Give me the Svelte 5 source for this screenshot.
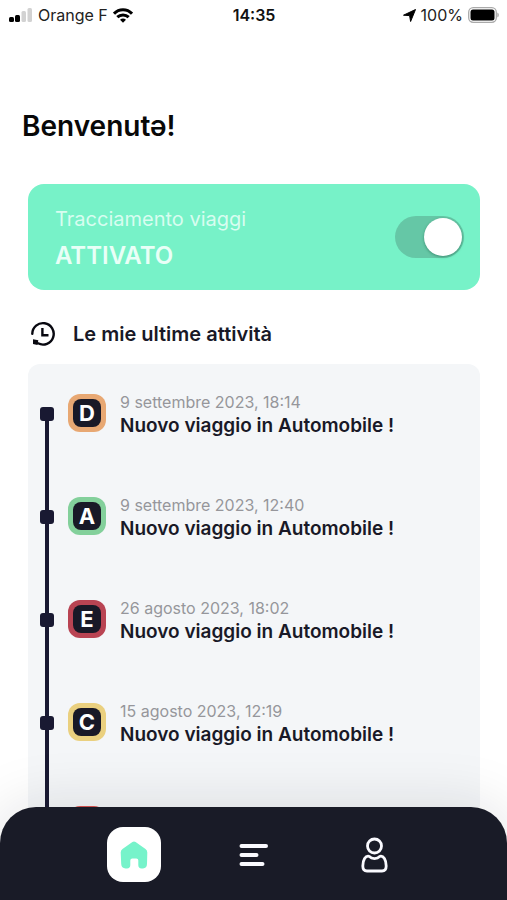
<script>
  let tracking = $state(true);

  const trips = [
    { grade: 'D', color: '#e8a873', date: '9 settembre 2023, 18:14' },
    { grade: 'A', color: '#83d09b', date: '9 settembre 2023, 12:40' },
    { grade: 'E', color: '#b94453', date: '26 agosto 2023, 18:02' },
    { grade: 'C', color: '#ead07f', date: '15 agosto 2023, 12:19' },
    { grade: 'E', color: '#d9534f', date: '14 agosto 2023, 18:47' }
  ];
</script>

<div class="screen">
  <header class="status">
    <div class="side">
      <svg width="24" height="16" viewBox="0 0 24 16" aria-hidden="true">
        <rect x="0" y="10" width="5" height="5" rx="1.5" fill="#000" />
        <rect x="6" y="8" width="5" height="7" rx="1.5" fill="#000" />
        <rect x="12.500" y="4" width="4.500" height="11" rx="1.5" fill="#d2d2d2" />
        <rect x="18.500" y="1" width="4.500" height="14" rx="1.5" fill="#d2d2d2" />
      </svg>
      <span class="carrier">Orange F</span>
      <svg width="20" height="15" viewBox="0 0 20 15" fill="none" stroke="#000" stroke-width="3" aria-hidden="true">
        <path d="M1 5.600C6 .4 14 .4 19 5.600" />
        <path d="M4.300 9.200C7.500 6.100 12.500 6.100 15.700 9.200" />
        <path d="M10 14.800 7 11.800Q10 9.300 13 11.800Z" fill="#000" stroke="none" />
      </svg>
    </div>
    <span class="clock">14:35</span>
    <div class="side end">
      <svg width="13" height="13" viewBox="0 0 13 13" aria-hidden="true">
        <path d="M12.500 .5 7.600 12.500 6.600 6.600 .5 6.200Z" fill="#000" stroke="#000" stroke-linejoin="round" />
      </svg>
      <span class="percent">100%</span>
      <svg width="31" height="16" viewBox="0 0 31 16" aria-hidden="true">
        <rect x=".7" y=".7" width="27.600" height="14.600" rx="4.500" fill="#fff" stroke="#aaa" stroke-width="1.300" />
        <rect x="2.500" y="2.500" width="24" height="11" rx="2.500" fill="#000" />
        <path d="M29.300 5.500Q30.900 6.300 30.900 8T29.300 10.500Z" fill="#aaa" />
      </svg>
    </div>
  </header>

  <main>
    <h1>Benvenutə!</h1>

    <section class="tracking">
      <label for="tracking">
        <span class="caption">Tracciamento viaggi</span>
        <strong>{tracking ? 'ATTIVATO' : 'DISATTIVATO'}</strong>
      </label>
      <input id="tracking" type="checkbox" role="switch" bind:checked={tracking} />
    </section>

    <h2>
      <svg width="26" height="26" viewBox="0 0 26 26" fill="none" stroke="#080810" stroke-width="2.400" aria-hidden="true">
        <path d="M2.300 12.800A10.700 10.700 0 1 1 8 22.300" stroke-linecap="round" />
        <path d="M12.400 7V14.200H18.500" />
        <path d="M3 18.300 8.300 19.300 7.500 24 3 23Z" fill="#080810" stroke="none" />
      </svg>
      Le mie ultime attività
    </h2>

    <ol class="panel">
      {#each trips as trip}
        <li>
          <span class="node"></span>
          <span class="badge" style:background={trip.color}><b>{trip.grade}</b></span>
          <div class="trip">
            <time>{trip.date}</time>
            <p>Nuovo viaggio in Automobile !</p>
          </div>
        </li>
      {/each}
    </ol>
  </main>

  <nav>
    <button class="tab active" aria-label="Home">
      <svg width="28" height="28" viewBox="0 0 28 28" aria-hidden="true">
        <path d="M12.400 1.100Q14 0 15.600 1.100L25.500 8Q27.300 9.300 27.300 11.400L27 23Q26.800 27.400 23 27.400H21.500Q18.300 27.400 18.300 24V19.500Q18.300 17.500 16.300 17.500H12.300Q10.300 17.500 10.300 19.500V24Q10.300 27.400 7 27.400H5.500Q1.500 27.400 1.200 23L.7 11.400Q.7 9.300 2.500 8Z" fill="#76f3ca" />
      </svg>
    </button>
    <button class="tab" aria-label="Attività">
      <svg width="30" height="24" viewBox="0 0 30 24" stroke="#fafaff" stroke-width="4" stroke-linecap="round" aria-hidden="true">
        <path d="M2.500 3H27M2.500 12H17.500M2.500 21H23.500" />
      </svg>
    </button>
    <button class="tab" aria-label="Profilo">
      <svg width="28" height="36" viewBox="0 0 28 36" fill="none" stroke="#fafaff" stroke-width="2.800" aria-hidden="true">
        <circle cx="14.500" cy="9" r="7" />
        <path d="M9 19.300C12 22.300 17 22.300 20 19.300C23.500 18.500 26.200 22.500 26.200 29Q26.200 34 22 34H7Q2.800 34 2.800 29C2.800 22.500 5.500 18.500 9 19.300Z" stroke-linejoin="round" />
      </svg>
    </button>
  </nav>
</div>

<style>
  :global(body) {
    margin: 0;
    background: #fff;
  }

  .screen {
    height: 100vh;
    display: flex;
    flex-direction: column;
    overflow: hidden;
    font-family: Inter, 'Liberation Sans', sans-serif;
    color: #191927;
  }

  .status {
    display: flex;
    align-items: center;
    height: 30px;
    padding: 0 8px 0 9px;
    font-size: 16px;
    color: #222;
  }

  .side {
    flex: 1;
    display: flex;
    align-items: center;
    gap: 5px;
  }

  .end {
    justify-content: flex-end;
  }

  .clock {
    font-weight: 600;
    color: #111;
  }

  main {
    flex: 1;
    min-height: 0;
    display: flex;
    flex-direction: column;
    padding: 80px 27px 0 28px;
    overflow: hidden;
  }

  h1 {
    margin: 0 0 0 -6px;
    font-size: 28px;
    line-height: 32px;
    font-weight: 600;
    color: #080808;
  }

  .tracking {
    display: flex;
    align-items: center;
    justify-content: space-between;
    margin-top: 42px;
    padding: 0 16px 0 27px;
    border-radius: 16px;
    background: #77f2c8;
    color: #e9fff7;
  }

  label {
    display: flex;
    flex-direction: column;
    gap: 6px;
    padding: 20px 0 18px;
  }

  .caption {
    font-size: 20px;
    line-height: 30px;
    font-weight: 400;
    color: #d8fdf0;
  }

  strong {
    font-size: 24px;
    line-height: 32px;
    font-weight: 600;
  }

  input {
    appearance: none;
    box-sizing: border-box;
    display: flex;
    width: 69px;
    height: 42px;
    margin: 0;
    padding: 2px;
    border-radius: 21px;
    background: #65c7a6;
  }

  input::before {
    content: '';
    width: 38px;
    height: 38px;
    border-radius: 50%;
    background: #fff;
    box-shadow: 0 1px 3px rgba(0, 60, 40, 0.4);
  }

  input:checked::before {
    margin-left: auto;
  }

  h2 {
    display: flex;
    align-items: center;
    gap: 17px;
    margin: 29px 0 0 2px;
    font-size: 20px;
    line-height: 30px;
    font-weight: 600;
  }

  .panel {
    flex: 1;
    min-height: 0;
    margin: 15px 0 0;
    padding: 26px 12px 0 12px;
    border-radius: 12px 12px 0 0;
    background: #f4f6f8;
    list-style: none;
  }

  li {
    display: grid;
    grid-template-columns: 14px 38px 1fr;
    column-gap: 14px;
    height: 103px;
  }

  .node {
    display: flex;
    flex-direction: column;
    align-items: center;
    padding-top: 17px;
  }

  .node::before {
    content: '';
    width: 14px;
    height: 14px;
    flex: none;
    border-radius: 3px;
    background: #191932;
  }

  .node::after {
    content: '';
    width: 4px;
    flex: 1;
    background: #191932;
    margin-bottom: -17px;
  }

  .badge {
    display: flex;
    align-items: center;
    justify-content: center;
    height: 38px;
    margin-top: 4px;
    border-radius: 12px;
  }

  b {
    width: 28px;
    border-radius: 8px;
    background: #191927;
    color: #fff;
    font-size: 22px;
    line-height: 28px;
    font-weight: 700;
    text-align: center;
  }

  time {
    display: block;
    font-size: 16px;
    line-height: 24px;
    font-weight: 400;
    color: #96969b;
  }

  p {
    margin: 0;
    font-size: 19px;
    line-height: 24px;
    font-weight: 600;
  }

  nav {
    position: relative;
    display: flex;
    justify-content: center;
    gap: 66px;
    box-sizing: border-box;
    height: 93px;
    margin: 0;
    padding: 20px 0 0;
    border-radius: 36px 36px 0 0;
    background: #191b27;
    box-shadow: 0 0 60px rgba(20, 20, 30, 0.13);
  }

  .tab {
    display: flex;
    align-items: center;
    justify-content: center;
    width: 54px;
    height: 55px;
    padding: 0;
    border: 0;
    border-radius: 16px;
    background: none;
  }

  .active {
    background: #fff;
  }
</style>
